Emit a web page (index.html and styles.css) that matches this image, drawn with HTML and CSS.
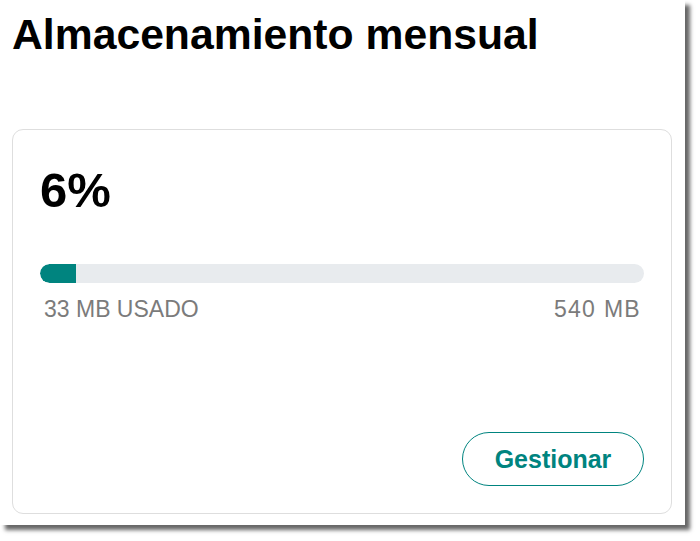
FILE: index.html
```html
<!DOCTYPE html>
<html lang="es">
<head>
<meta charset="utf-8">
<title>Almacenamiento mensual</title>
<link rel="stylesheet" href="styles.css">
</head>
<body>
<div class="window">
  <h1 class="title">Almacenamiento mensual</h1>
  <section class="card">
    <div class="percent">6%</div>
    <div class="bar"><div class="bar-fill" style="width:6%"></div></div>
    <div class="labels">
      <span class="used">33 MB USADO</span>
      <span class="total">540 MB</span>
    </div>
    <div class="actions">
      <button class="manage">Gestionar</button>
    </div>
  </section>
</div>
</body>
</html>
```

FILE: styles.css
```css
html, body {
  margin: 0;
  padding: 0;
  background: #ffffff;
}

body {
  font-family: "Liberation Sans", Arial, sans-serif;
  width: 700px;
  height: 541px;
  overflow: hidden;
}

.window {
  box-sizing: border-box;
  width: 685px;
  height: 525px;
  background: #ffffff;
  padding: 12.5px 13px 0 12px;
  box-shadow: 5px 5px 4px rgba(0, 0, 0, 0.6);
}

.title {
  margin: 0;
  font-size: 42.7px;
  line-height: 1;
  font-weight: 700;
  color: #000000;
}

.card {
  box-sizing: border-box;
  margin-top: 74px;
  width: 660px;
  height: 385px;
  border: 1px solid #dedede;
  border-radius: 11px;
  padding: 36px 27px 27px 27px;
  display: flex;
  flex-direction: column;
}

.percent {
  font-size: 49px;
  line-height: 1;
  font-weight: 700;
  color: #000000;
}

.bar {
  margin-top: 49px;
  height: 19px;
  border-radius: 10px;
  background: #e8ebee;
  overflow: hidden;
}

.bar-fill {
  height: 100%;
  background: #00847f;
  border-radius: 10px 0 0 10px;
}

.labels {
  margin-top: 15px;
  display: flex;
  justify-content: space-between;
  padding: 0 4px 0 4px;
  font-size: 23px;
  line-height: 1;
  color: #7b7b7b;
}

.total {
  letter-spacing: 1.3px;
  margin-right: -1px;
}

.actions {
  margin-top: auto;
  display: flex;
  justify-content: flex-end;
}

.manage {
  box-sizing: border-box;
  width: 182px;
  height: 54px;
  border: 1px solid #00847f;
  border-radius: 27px;
  background: #ffffff;
  color: #00847f;
  font-family: "Liberation Sans", Arial, sans-serif;
  font-size: 25px;
  font-weight: 700;
  padding: 0;
  cursor: pointer;
}
```
